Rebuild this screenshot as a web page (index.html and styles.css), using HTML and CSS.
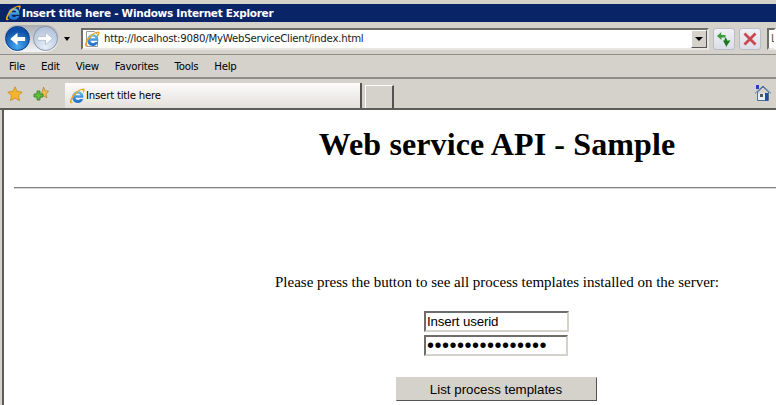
FILE: index.html
```html
<!DOCTYPE html>
<html>
<head>
<meta charset="utf-8">
<title>Insert title here</title>
<link rel="stylesheet" href="styles.css">
</head>
<body>
<svg class="defs" width="0" height="0">
  <defs>
    <linearGradient id="ieblue" x1="0" y1="0" x2="0" y2="1">
      <stop offset="0" stop-color="#6fc4f2"/>
      <stop offset="1" stop-color="#1668c4"/>
    </linearGradient>
    <g id="ie">
      <path d="M9 3a5.700 5.700 0 0 0-5.800 5.700A5.700 5.700 0 0 0 14.300 11h-3.100a2.700 2.700 0 0 1-4.800-1.200h8V8.700A5.700 5.700 0 0 0 9 3zM6.500 7.300a2.600 2.600 0 0 1 5 0z" fill="url(#ieblue)"/>
      <path d="M1.300 15C-.3 13 3.500 6 8.500 2.800 11.500.9 14.800-.2 15.500 1c.6 1-.6 3.300-1.700 4.800.3-1.700.6-3.700-.6-3.900C10.500 1.500 3.200 8.500 2.600 13c-.1 1 .5 1.400 1.800 1.200-1.200 1-2.500 1.500-3.100.8z" fill="#f0a81e"/>
    </g>
  </defs>
</svg>
<header class="chrome">
  <div class="titlebar">
    <svg class="title-icon" viewBox="0 0 16 16" width="16" height="16"><use href="#ie"/></svg>
    <span>Insert title here - Windows Internet Explorer</span>
  </div>
  <div class="navbar">
    <div class="nav-buttons">
      <span class="nav-round back"><svg viewBox="0 0 24 24" width="24" height="24"><path d="M20 10h-8V5.500L4.500 12l7.500 6.500V14h8z" fill="#fff"/></svg></span>
      <span class="nav-round forward"><svg viewBox="0 0 24 24" width="23" height="23"><path d="M4 10h8V5.500l7.500 6.500-7.500 6.500V14H4z" fill="#fff" stroke="#a9b8cc" stroke-width=".8"/></svg></span>
    </div>
    <span class="caret-small"></span>
    <div class="address">
      <svg class="page-icon" viewBox="0 0 16 16" width="16" height="16"><path d="M2.500.5h8l3 3v12h-11z" fill="#fff" stroke="#9a9a9a"/><use href="#ie"/></svg>
      <span class="url">http://localhost:9080/MyWebServiceClient/index.html</span>
      <span class="drop"><span class="caret"></span></span>
    </div>
    <span class="tool-btn"><svg viewBox="0 0 16 16" width="16" height="16"><path d="M5.500 1C5 2 5 3 5.500 4H9.500v2.500H5.500V9L1 5z" fill="#3d9b3d"/><path d="M9 6.500C10.500 7 11 8 11 9.500h3.500L11 14.500 10.500 16 7 9.500h1.500z" fill="#1b7a1b"/></svg></span>
    <span class="tool-btn"><svg viewBox="0 0 16 16" width="16" height="16"><path d="M2.500 2.500l11 11M13.500 2.500l-11 11" stroke="#c9484e" stroke-width="2.800"/></svg></span>
    <div class="search"><span>L</span></div>
  </div>
  <nav class="menubar">
    <span>File</span><span>Edit</span><span>View</span><span>Favorites</span><span>Tools</span><span>Help</span>
  </nav>
  <div class="tabbar">
    <svg class="fav" viewBox="0 0 16 16" width="16" height="16"><path d="M8 .8l2.200 4.700 5 .6-3.700 3.500 1 5L8 12.100 3.500 14.600l1-5L.8 6.100l5-.6z" fill="#f6b42c" stroke="#c98a18" stroke-width=".8"/></svg>
    <svg class="fav add" viewBox="0 0 16 16" width="16" height="16"><path d="M10.500 1l1.600 3.800 3.500.4-2.600 2.700.8 4-3.300-2.100-3 1.700z" fill="#f2c04a" stroke="#a9802a" stroke-width=".7"/><path d="M4 5h3v3h3v3H7v3H4v-3H1V8h3z" fill="#5cc03c" stroke="#2d7f1d" stroke-width=".8"/></svg>
    <div class="tab">
      <svg viewBox="0 0 16 16" width="16" height="16"><use href="#ie"/></svg>
      <span>Insert title here</span>
    </div>
    <div class="tab-new"></div>
    <svg class="home" viewBox="0 0 18 18" width="18" height="18"><path d="M1 9.500L9 2l8 7.500M3.500 8v8.500h11V8L9 3z" fill="#e9eef5" stroke="#4f6f96"/><rect x="2" y="1" width="3" height="4" fill="#2a3fc0"/><rect x="6" y="10" width="3" height="3" fill="#4a5866"/><rect x="11" y="9" width="3" height="7.500" fill="#1d4f9c"/></svg>
  </div>
</header>
<div class="frame">
<main class="page">
  <div class="content">
    <h1>Web service API - Sample</h1>
    <hr>
    <p>Please press the button to see all process templates installed on the server:</p>
    <form class="login">
      <input class="field" type="text" value="Insert userid">
      <input class="field pass" type="password" value="aaaaaaaaaaaaaaaa">
      <button class="submit" type="button">List process templates</button>
    </form>
  </div>
</main>
</div>
</body>
</html>
```
FILE: styles.css
```css
html, body {
  margin: 0;
  width: 776px;
  height: 405px;
  overflow: hidden;
  background: #d5d2cc;
}
.defs { display: block; height: 0; }
.chrome {
  background: #d5d2cc;
  color: #000;
  padding-top: 4px;
}
.titlebar {
  height: 18px;
  background: #0a2468;
  color: #fff;
  display: flex;
  align-items: center;
  gap: 1px;
  padding-left: 5px;
  font-family: "DejaVu Sans", sans-serif;
  font-size: 10.5px;
  font-weight: bold;
  letter-spacing: -0.28px;
}
.navbar {
  height: 33px;
  box-sizing: border-box;
  border-bottom: 1px solid #8f8d88;
  display: flex;
  align-items: center;
  padding-top: 1px;
  overflow: hidden;
}
.nav-buttons {
  margin-left: 4px;
  width: 55px;
  height: 27px;
  border-radius: 14px;
  background: linear-gradient(#a9acb2, #f4f5f7);
  display: flex;
  align-items: center;
  justify-content: space-between;
}
.nav-round {
  width: 25px;
  height: 25px;
  border-radius: 50%;
  display: flex;
  align-items: center;
  justify-content: center;
  margin: 0 1px;
  box-sizing: border-box;
}
.nav-round svg { display: block; }
.back {
  background: radial-gradient(circle at 50% 85%, #48aaf2, #0e4ea6 72%);
  border: 1px solid #0c3f8a;
}
.forward {
  background: radial-gradient(circle at 50% 85%, #e6edf6, #b4c4da 80%);
  border: 1px solid #8a97aa;
}
.caret-small {
  margin-left: 5px;
  width: 0;
  height: 0;
  border: 3.500px solid transparent;
  border-top: 4px solid #000;
  border-bottom: 0;
}
.address {
  margin-left: 11px;
  width: 628px;
  height: 22px;
  box-sizing: border-box;
  background: #fff;
  border: 2px solid;
  border-color: #6f6d69 #e8e6e2 #e8e6e2 #6f6d69;
  display: flex;
  align-items: center;
}
.page-icon { margin-left: 1px; flex: none; }
.url {
  margin-left: 4px;
  flex: 1;
  font-family: "DejaVu Sans", sans-serif;
  font-size: 10.200px;
  color: #1a1a1a;
  letter-spacing: -0.24px;
}
.drop {
  width: 16px;
  height: 18px;
  background: #d5d2cc;
  border: 1px solid;
  border-color: #fff #555 #555 #fff;
  box-sizing: border-box;
  display: flex;
  align-items: center;
  justify-content: center;
}
.caret {
  width: 0;
  height: 0;
  border: 4px solid transparent;
  border-top: 4px solid #000;
  border-bottom: 0;
}
.tool-btn {
  margin-left: 4px;
  width: 22px;
  height: 22px;
  box-sizing: border-box;
  border: 1px solid #b8bcc6;
  border-radius: 3px;
  background: linear-gradient(#f0f1f6, #dcdee8);
  display: flex;
  align-items: center;
  justify-content: center;
}
.tool-btn + .tool-btn { margin-left: 4px; }
.search {
  margin-left: 6px;
  flex: 1;
  height: 22px;
  box-sizing: border-box;
  background: #fff;
  border: 2px solid;
  border-color: #6f6d69 transparent #e8e6e2 #6f6d69;
  padding-left: 2px;
  font-family: "DejaVu Sans", sans-serif;
  font-size: 10.200px;
  line-height: 18px;
  color: #555;
  overflow: hidden;
}
.menubar {
  height: 24px;
  box-sizing: border-box;
  border-bottom: 2px solid #8f8d88;
  display: flex;
  align-items: center;
  padding-left: 9px;
  gap: 16px;
  font-family: "DejaVu Sans", sans-serif;
  font-size: 10.200px;
  letter-spacing: -0.26px;
}
.tabbar {
  height: 31px;
  box-sizing: border-box;
  display: flex;
  align-items: flex-end;
  position: relative;
  border-bottom: 2px solid #5e5c58;
}
.fav { align-self: center; margin-left: 7px; flex: none; }
.fav.add { margin-left: 10px; }
.tab {
  margin-left: 16px;
  width: 297px;
  height: 25px;
  box-sizing: border-box;
  border-right: 2px solid #55534f;
  background: linear-gradient(#fdfcfb, #e3e0dc);
  display: flex;
  align-items: center;
  gap: 1px;
  padding-left: 4px;
  font-family: "DejaVu Sans", sans-serif;
  font-size: 10.200px;
  letter-spacing: -0.22px;
}
.tab-new {
  margin-left: 3px;
  width: 29px;
  height: 23px;
  box-sizing: border-box;
  border: 1px solid #fff;
  border-bottom: 0;
  border-right: 2px solid #55534f;
}
.home { position: absolute; right: 4px; top: 5px; }
.frame {
  padding-left: 2px;
  background: #d5d2cc;
}
.page {
  height: 295px;
  overflow: hidden;
  border-left: 2px solid #5e5c58;
  background: #fff;
  font-family: "Liberation Serif", serif;
}
.content {
  width: 966px;
  margin-left: 10px;
  text-align: center;
}
h1 {
  margin: 0;
  padding-top: 16px;
  font-size: 32px;
  line-height: 37px;
  font-weight: bold;
  letter-spacing: 0.12px;
}
hr {
  margin: 24px 0 0;
  height: 0;
  border: 0;
  border-top: 1px solid #808080;
  border-bottom: 1px solid #d8d8d8;
}
p {
  margin: 84px 0 0;
  font-size: 15px;
  line-height: 18px;
}
.login {
  display: flex;
  flex-direction: column;
  align-items: center;
  margin-top: 20px;
}
.field {
  box-sizing: border-box;
  width: 145px;
  height: 21px;
  margin: 0 0 3px -1px;
  padding: 0 1px;
  border: 2px solid;
  border-color: #6f6d69 #d5d2cc #d5d2cc #6f6d69;
  font-family: "Liberation Sans", sans-serif;
  font-size: 13.300px;
  letter-spacing: -0.15px;
  color: #000;
  background: #fff;
  outline: 0;
}
.field.pass {
  width: 144px;
  margin-left: -2px;
  font-size: 20px;
  letter-spacing: 0.5px;
}
.submit {
  margin-top: 18px;
  margin-left: -2px;
  width: 201px;
  height: 24px;
  box-sizing: border-box;
  background: #d5d2cc;
  border: 1px solid;
  border-color: #d5d2cc #55534f #55534f #d5d2cc;
  font-family: "Liberation Sans", sans-serif;
  font-size: 13.300px;
  color: #000;
  padding: 0;
}
```
